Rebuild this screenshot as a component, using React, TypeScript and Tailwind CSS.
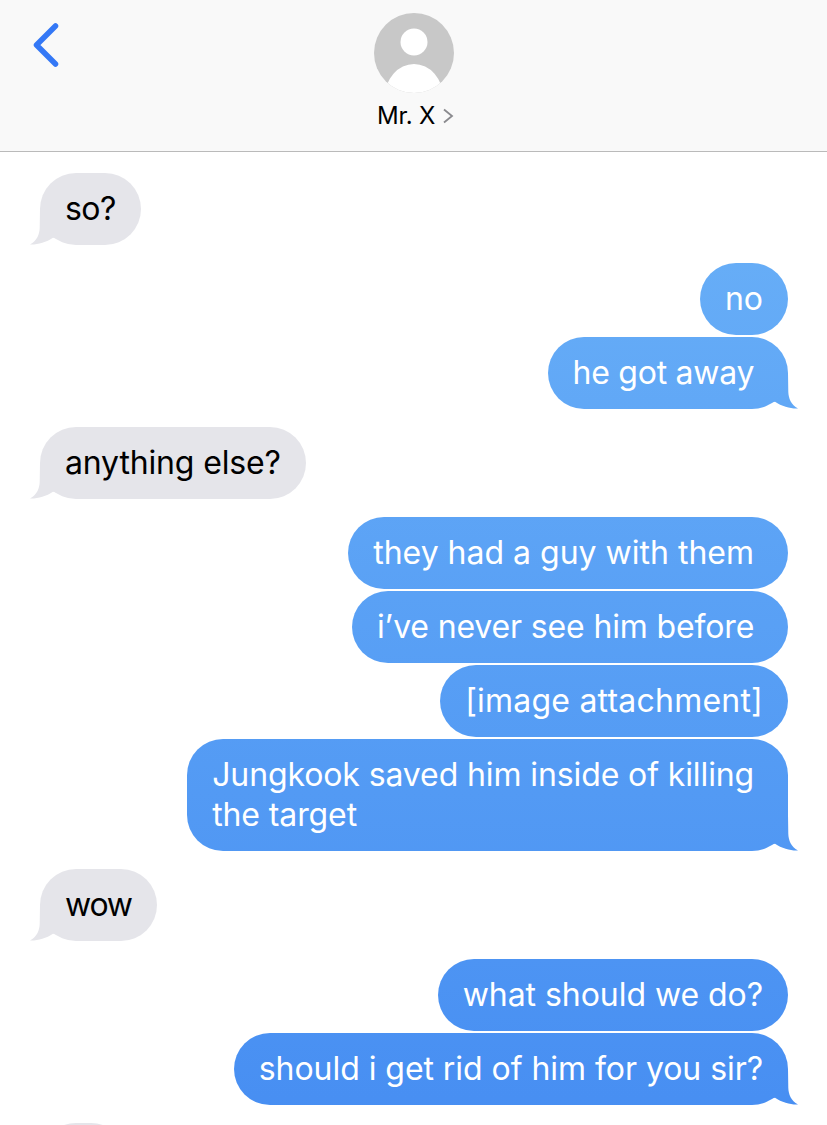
const font = "font-['Inter','Liberation_Sans',sans-serif]";
const blue = "bg-fixed bg-linear-to-b from-[#70b6f8] to-[#478ef2]";

type Msg = {
  text: string;
  me?: boolean;
  tail?: boolean;
  gap: string;
  track?: string;
};

const messages: Msg[] = [
  { text: "so?", tail: true, gap: "mt-[21px]", track: "tracking-[-0.6px]" },
  { text: "no", me: true, gap: "mt-[18px]" },
  { text: "he got away ", me: true, tail: true, gap: "mt-[2px]", track: "tracking-[-0.25px]" },
  { text: "anything else?", tail: true, gap: "mt-[18px]", track: "tracking-[-0.15px]" },
  { text: "they had a guy with them ", me: true, gap: "mt-[18px]" },
  { text: "i’ve never see him before ", me: true, gap: "mt-[2px]", track: "tracking-[-0.15px]" },
  { text: "[image attachment]", me: true, gap: "mt-[2px]", track: "tracking-[0.22px]" },
  { text: "Jungkook saved him inside of killing \nthe target", me: true, tail: true, gap: "mt-[2px]", track: "tracking-[-0.11px]" },
  { text: "wow", tail: true, gap: "mt-[18px]", track: "tracking-[-1.2px]" },
  { text: "what should we do?", me: true, gap: "mt-[18px]", track: "tracking-[-0.05px]" },
  { text: "should i get rid of him for you sir?", me: true, tail: true, gap: "mt-[2px]", track: "tracking-[-0.05px]" },
];

// same outline both ways, the grey one is just flipped
const tailShape =
  "[clip-path:path('M0,0_L18,0_L18.3,18.7_C18.5,25_21,32_28,35.4_C22,36_12,33.5_5,28.7_L0,30_Z')]";

const Tail = ({ me }: { me?: boolean }) => (
  <div
    className={
      me
        ? `absolute bottom-0 right-[-10px] h-9 w-7 ${blue} ${tailShape}`
        : `absolute bottom-0 left-[-10px] h-9 w-7 -scale-x-100 bg-[#e5e5ea] ${tailShape}`
    }
  />
);

const Bubble = ({ msg }: { msg: Msg }) => (
  <div className={`flex ${msg.me ? "justify-end" : "justify-start"} ${msg.gap}`}>
    <div
      className={
        msg.me
          ? `relative rounded-[36px] px-[25px] py-4 text-white ${blue}`
          : "relative rounded-[36px] bg-[#e5e5ea] px-[25px] py-4 text-black"
      }
    >
      <p className={`relative z-10 whitespace-pre text-[32px] leading-10 ${msg.track ?? ""}`}>{msg.text}</p>
      {msg.tail && <Tail me={msg.me} />}
    </div>
  </div>
);

export default function App() {
  return (
    <div className={`h-[1125px] w-[827px] overflow-hidden bg-white ${font}`}>
      <header className="grid h-[152px] grid-cols-[374px_80px_1fr] border-b border-[#bababa] bg-[#f9f9f9]">
        <div className="pl-[30px] pt-5">
          <svg viewBox="0 0 32 48" className="h-12 w-8" fill="none" stroke="#3478f6" strokeWidth="5.5" strokeLinecap="round" strokeLinejoin="round">
            <path d="M25.5 6 L6.5 25 L25.5 44" />
          </svg>
        </div>
        <div className="flex flex-col pt-[13px]">
          <svg viewBox="0 0 80 80" className="h-20 w-20">
            <defs>
              <clipPath id="avatar">
                <circle cx="40" cy="40" r="40" />
              </clipPath>
            </defs>
            <circle cx="40" cy="40" r="40" fill="#c8c8c8" />
            <circle cx="40" cy="29" r="13.5" fill="#fff" />
            <ellipse cx="40" cy="84" rx="29" ry="33" fill="#fff" clipPath="url(#avatar)" />
          </svg>
          <div className="mt-[9px] flex items-center gap-[7px] whitespace-nowrap pl-[3px]">
            <span className="text-2xl leading-7 tracking-[-0.2px] text-black">Mr. X</span>
            <svg viewBox="0 0 12 18" className="h-[18px] w-3 shrink-0" fill="none" stroke="#8a8a8e" strokeWidth="1.8">
              <path d="M2 2.5 L10 9 L2 15.5" />
            </svg>
          </div>
        </div>
        <div />
      </header>
      <main className="pl-10 pr-[39px]">
        {messages.map((m, i) => (
          <Bubble key={i} msg={m} />
        ))}
        {/* next incoming bubble, only its top edge is in frame */}
        <div className="mt-[18px] h-[72px] w-[87px] rounded-[36px] bg-[#e5e5ea]" />
      </main>
    </div>
  );
}
